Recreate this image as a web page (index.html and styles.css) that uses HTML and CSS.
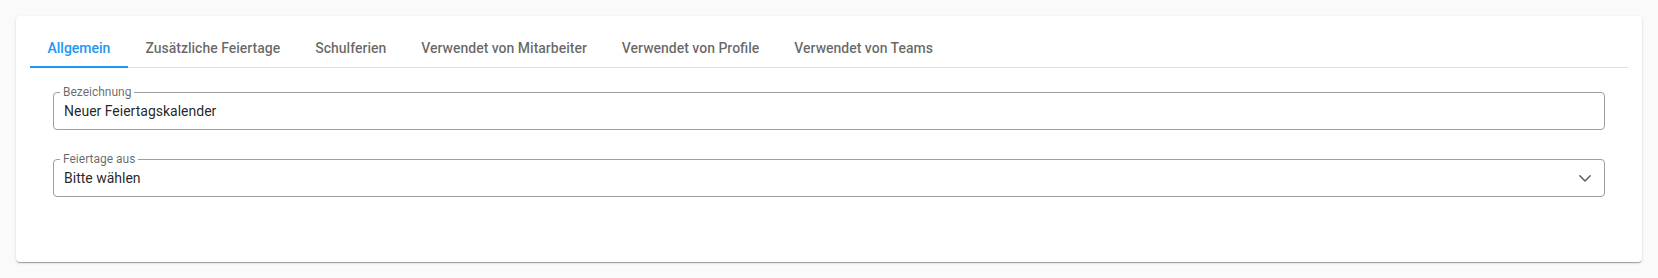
FILE: index.html
```html
<!DOCTYPE html>
<html lang="de">
<head>
<meta charset="utf-8">
<title>Feiertagskalender</title>
<link rel="stylesheet" href="styles.css">
</head>
<body>
<div class="card">
  <div class="tabs">
    <div class="tab active">Allgemein</div>
    <div class="tab">Zusätzliche Feiertage</div>
    <div class="tab">Schulferien</div>
    <div class="tab">Verwendet von Mitarbeiter</div>
    <div class="tab">Verwendet von Profile</div>
    <div class="tab">Verwendet von Teams</div>
  </div>
  <div class="content">
    <fieldset class="field">
      <legend class="field-label">Bezeichnung</legend>
      <div class="field-value">Neuer Feiertagskalender</div>
    </fieldset>
    <fieldset class="field field-select">
      <legend class="field-label">Feiertage aus</legend>
      <div class="field-value select-row">
        <span>Bitte wählen</span>
        <svg class="chevron" width="12" height="7" viewBox="0 0 12 7" aria-hidden="true">
          <polyline points="0.8,0.8 6,6 11.2,0.8" fill="none" stroke="#5f5f5f" stroke-width="1.5" stroke-linecap="round" stroke-linejoin="round"/>
        </svg>
      </div>
    </fieldset>
  </div>
</div>
</body>
</html>
```
FILE: styles.css
```css
* { box-sizing: border-box; }

html, body {
  margin: 0;
  background: #fafafa;
  font-family: Roboto, "Liberation Sans", Arial, sans-serif;
}

body {
  padding: 16px 16px;
}

.card {
  background: #ffffff;
  border-radius: 4px;
  box-shadow: 0 2px 1px -1px rgba(0,0,0,0.2), 0 1px 1px 0 rgba(0,0,0,0.14), 0 1px 3px 0 rgba(0,0,0,0.12);
  padding: 12px 14px 65px 14px;
  height: 246px;
}

.tabs {
  display: flex;
  height: 40px;
  border-bottom: 1px solid #e0e0e0;
}

.tab {
  display: flex;
  align-items: center;
  justify-content: center;
  padding: 2px 17.5px 0 17.5px;
  height: 40px;
  margin-bottom: -1px;
  font-size: 14px;
  font-weight: 500;
  color: rgba(0,0,0,0.6);
  border-bottom: 2px solid transparent;
  white-space: nowrap;
}

.tab.active {
  color: #2196f3;
  border-bottom-color: #2196f3;
}

.content {
  padding: 18px 23px 0 23px;
  display: flex;
  flex-direction: column;
  gap: 23px;
}

.field {
  margin: 0;
  border: 1px solid #9e9e9e;
  border-radius: 4px;
  padding: 0 10px 0 6px;
  min-width: 0;
}

.field-label {
  font-size: 12px;
  line-height: 12px;
  padding: 0 3px;
  color: rgba(0,0,0,0.6);
}

.field-value {
  font-size: 14px;
  line-height: 20px;
  color: rgba(0,0,0,0.87);
  padding: 3px 0 8px 4px;
}

.select-row {
  display: flex;
  align-items: center;
  justify-content: space-between;
}

.chevron {
  display: block;
  margin-right: 3px;
}
```
